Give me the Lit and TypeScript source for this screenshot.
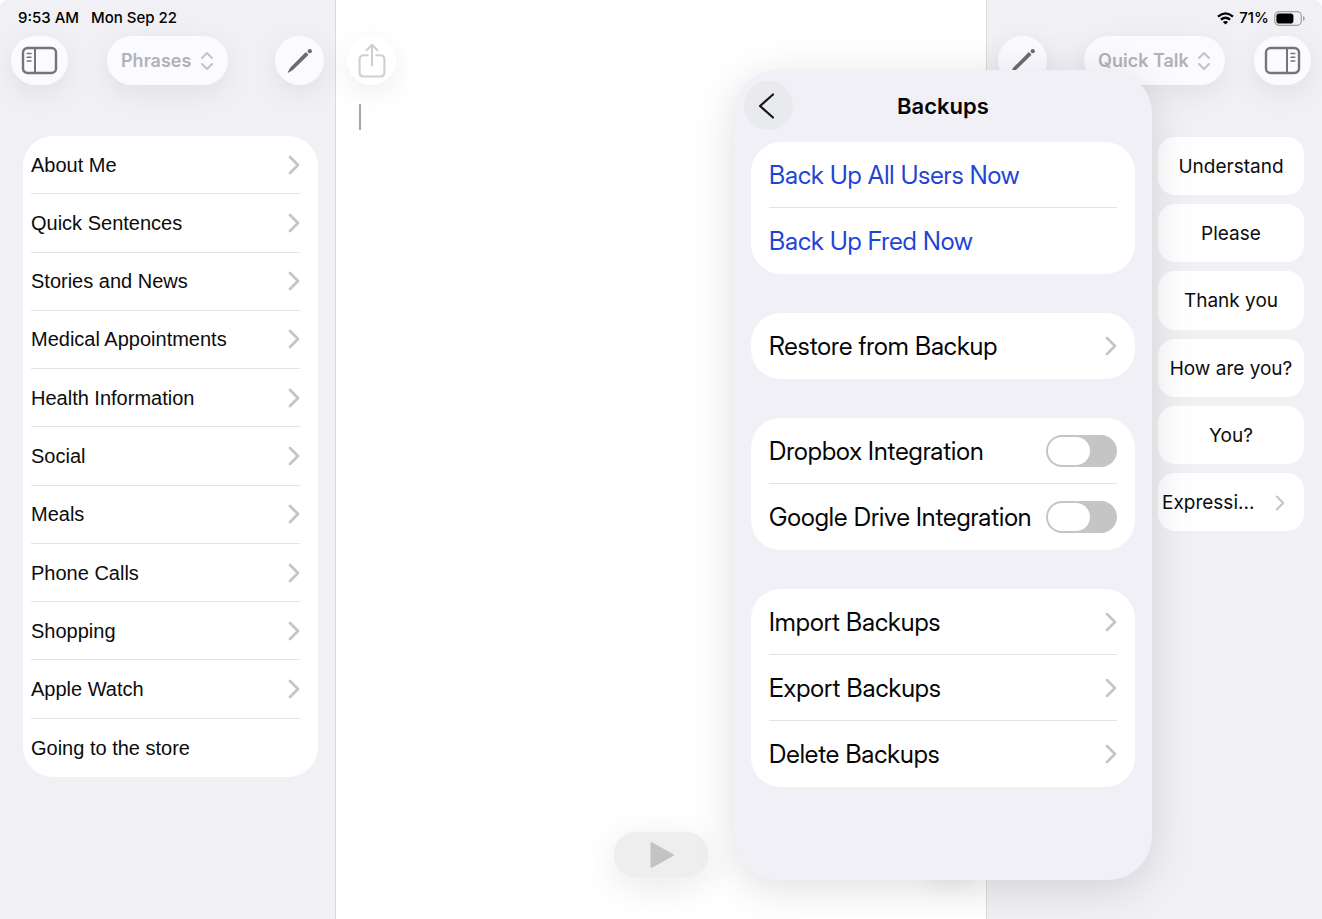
import { LitElement, html, svg, css, nothing } from "lit";
import { customElement, property } from "lit/decorators.js";

interface Phrase {
  label: string;
  folder: boolean;
}

interface BackupRow {
  label: string;
  kind: "action" | "link" | "toggle";
}

const PHRASES: Phrase[] = [
  { label: "About Me", folder: true },
  { label: "Quick Sentences", folder: true },
  { label: "Stories and News", folder: true },
  { label: "Medical Appointments", folder: true },
  { label: "Health Information", folder: true },
  { label: "Social", folder: true },
  { label: "Meals", folder: true },
  { label: "Phone Calls", folder: true },
  { label: "Shopping", folder: true },
  { label: "Apple Watch", folder: true },
  { label: "Going to the store", folder: false },
];

const QUICK_TALK: Phrase[] = [
  { label: "Understand", folder: false },
  { label: "Please", folder: false },
  { label: "Thank you", folder: false },
  { label: "How are you?", folder: false },
  { label: "You?", folder: false },
  { label: "Expressi...", folder: true },
];

const BACKUP_GROUPS: BackupRow[][] = [
  [
    { label: "Back Up All Users Now", kind: "action" },
    { label: "Back Up Fred Now", kind: "action" },
  ],
  [{ label: "Restore from Backup", kind: "link" }],
  [
    { label: "Dropbox Integration", kind: "toggle" },
    { label: "Google Drive Integration", kind: "toggle" },
  ],
  [
    { label: "Import Backups", kind: "link" },
    { label: "Export Backups", kind: "link" },
    { label: "Delete Backups", kind: "link" },
  ],
];

const chevron = (weight: number) => html`
  <svg class="chevron" width="12" height="20" viewBox="0 0 12 20" fill="none" stroke="#c4c4c6"
    stroke-width=${weight} stroke-linecap="round" stroke-linejoin="round" aria-hidden="true">
    <path d="M2 2 L10 10 L2 18" />
  </svg>
`;

const sidebarIcon = (flip: boolean) => html`
  <svg width="37" height="29" viewBox="0 0 37 29" fill="none" stroke="#757575" aria-hidden="true">
    <g transform=${flip ? "translate(37 0) scale(-1 1)" : ""}>
      ${svg`
        <rect x="2" y="2" width="33" height="25" rx="4.5" stroke-width="2.4" />
        <path d="M14 2 V27" stroke-width="2" />
        <path d="M6.2 7.5 H10 M6.2 11.3 H10 M6.2 15.1 H10" stroke-width="1.5" stroke-linecap="round" />
      `}
    </g>
  </svg>
`;

const pencilIcon = html`
  <svg width="28" height="28" viewBox="0 0 28 28" fill="#6c6c6c" aria-hidden="true">
    <path d="M19.8 5 L22.6 7.8 L6.9 23.1 L2.8 25.6 Q1.6 26 1.9 24.9 L4.2 20.7 Z" />
    <circle cx="23.8" cy="4.2" r="2.1" />
  </svg>
`;

const shareIcon = html`
  <svg width="28" height="36" viewBox="0 0 28 36" fill="none" stroke="#cfcfcf" stroke-width="2.1"
    stroke-linecap="round" stroke-linejoin="round" aria-hidden="true">
    <path d="M9.6 12.3 H5.8 Q1.6 12.3 1.6 16.5 V29.3 Q1.6 33.5 5.8 33.5 H22.2 Q26.4 33.5 26.4 29.3 V16.5 Q26.4 12.3 22.2 12.3 H18.4" />
    <path d="M14 22.5 V2 M8.5 7.3 L14 1.8 L19.5 7.3" />
  </svg>
`;

@customElement("picker-pill")
export class PickerPill extends LitElement {
  @property() value = "";

  static styles = css`
    :host {
      display: block;
    }
    .pill {
      display: flex;
      align-items: center;
      gap: 8px;
      height: 49px;
      padding: 1px 14px 0;
      box-sizing: border-box;
      border-radius: 25px;
      background: #fbfaff;
      box-shadow: 0 8px 28px rgba(0, 0, 0, 0.07);
    }
    select {
      appearance: none;
      border: 0;
      margin: 0;
      padding: 0;
      background: none;
      color: #b2b2b6;
      font: 600 18px / 24px Inter, sans-serif;
    }
  `;

  render() {
    return html`
      <div class="pill">
        <select aria-label="Phrase set">
          <option>${this.value}</option>
        </select>
        <svg width="14" height="20" viewBox="0 0 14 20" fill="none" stroke="#c3c3c6" stroke-width="2"
          stroke-linecap="round" stroke-linejoin="round" aria-hidden="true">
          <path d="M2 7 L7 2 L12 7 M2 13 L7 18 L12 13" />
        </svg>
      </div>
    `;
  }
}

@customElement("backups-popover")
export class BackupsPopover extends LitElement {
  static styles = css`
    :host {
      display: flex;
      flex-direction: column;
      box-sizing: border-box;
      padding: 11px 17px 17px;
      border-radius: 44px;
      background: #f0f0f6;
      box-shadow: 0 8px 44px rgba(0, 0, 0, 0.13);
      font-family: Inter, sans-serif;
      color: #060606;
    }
    .head {
      display: grid;
      grid-template-columns: 1fr auto 1fr;
      align-items: center;
      margin: 0 -7px 12px;
    }
    .back {
      display: grid;
      place-items: center;
      width: 49px;
      height: 49px;
      padding: 0 5px 0 0;
      border: 0;
      border-radius: 50%;
      background: #e9eaee;
    }
    h2 {
      margin: 0;
      font-size: 22px;
      line-height: 28px;
      font-weight: 600;
    }
    .groups {
      display: grid;
      gap: 39px;
    }
    .card {
      border-radius: 30px;
      background: #fff;
      padding: 0 18px;
    }
    .row {
      display: flex;
      align-items: center;
      justify-content: space-between;
      width: 100%;
      height: 66px;
      box-sizing: border-box;
      padding: 0;
      border: 0;
      background: none;
      color: inherit;
      font: 400 25px / 30px "Inter Display", Roboto, sans-serif;
      text-align: left;
      white-space: nowrap;
    }
    .row:not(:last-child) {
      border-bottom: 1px solid #e4e4e6;
    }
    .action {
      color: #1f45d6;
    }
    .switch {
      appearance: none;
      flex: none;
      display: flex;
      align-items: center;
      width: 71px;
      height: 32px;
      margin: 0;
      padding: 0 2px;
      box-sizing: border-box;
      border-radius: 16px;
      background: #c5c5c5;
    }
    .switch::before {
      content: "";
      width: 42px;
      height: 28px;
      border-radius: 14px;
      background: #fff;
    }
    .switch:checked {
      justify-content: flex-end;
      background: #34c759;
    }
  `;

  private renderRow(row: BackupRow) {
    if (row.kind === "toggle") {
      return html`
        <label class="row">
          <span>${row.label}</span>
          <input class="switch" type="checkbox" role="switch" />
        </label>
      `;
    }
    return html`
      <button class="row ${row.kind}">
        <span>${row.label}</span>
        ${row.kind === "link" ? chevron(2.5) : nothing}
      </button>
    `;
  }

  render() {
    return html`
      <div class="head">
        <button class="back" aria-label="Back">
          <svg width="17" height="28" viewBox="0 0 17 28" fill="none" stroke="#161616" stroke-width="2.2"
            stroke-linecap="round" stroke-linejoin="round" aria-hidden="true">
            <path d="M15 2.5 L2 14 L15 25.5" />
          </svg>
        </button>
        <h2>Backups</h2>
      </div>
      <div class="groups">
        ${BACKUP_GROUPS.map(
          (group) => html`<section class="card">${group.map((row) => this.renderRow(row))}</section>`
        )}
      </div>
    `;
  }
}

@customElement("app-root")
export class AppRoot extends LitElement {
  static styles = css`
    :host {
      display: grid;
      grid-template-columns: 336px minmax(0, 1fr) 336px;
      position: relative;
      min-height: 100vh;
      overflow: hidden;
      background: #fff;
      font-family: Inter, sans-serif;
      color: #0c0c0c;
    }
    .panel {
      display: flex;
      flex-direction: column;
      background: #f0f0f5;
    }
    .left {
      border-right: 1px solid #dadade;
      border-top-left-radius: 8px;
    }
    .right {
      border-left: 1px solid #dadade;
      border-top-right-radius: 8px;
    }
    .status {
      display: flex;
      align-items: center;
      gap: 12px;
      height: 36px;
      padding: 0 17px 0 18px;
      font-size: 15px;
      line-height: 20px;
      font-weight: 500;
      color: #000;
    }
    .status-right {
      justify-content: flex-end;
      gap: 5px;
    }
    .bar {
      display: grid;
      grid-template-columns: 1fr auto 1fr;
      align-items: center;
      height: 49px;
      padding: 0 11px;
    }
    .end {
      justify-self: end;
    }
    .round {
      display: grid;
      place-items: center;
      width: 49px;
      height: 49px;
      padding: 0;
      border: 0;
      border-radius: 25px;
      background: #fbfaff;
      box-shadow: 0 8px 28px rgba(0, 0, 0, 0.07);
    }
    .wide {
      width: 57px;
    }
    .list {
      display: grid;
      grid-auto-rows: 1fr;
      min-height: 641px;
      margin: 51px 17px 0 23px;
      padding: 0 18px 0 8px;
      box-sizing: border-box;
      border-radius: 30px;
      background: #fff;
    }
    .item {
      display: flex;
      align-items: center;
      justify-content: space-between;
      padding: 0;
      border: 0;
      background: none;
      color: inherit;
      font: 400 20px / 24px "Liberation Sans", sans-serif;
      text-align: left;
    }
    .item:not(:last-child) {
      border-bottom: 1px solid #e4e4e6;
    }
    .composer {
      display: flex;
      flex-direction: column;
      padding: 36px 11px 40px;
    }
    .plain {
      background: #fff;
    }
    .page {
      display: flex;
      flex: 1;
      padding: 19px 0 0 12px;
    }
    .caret {
      width: 2px;
      height: 26px;
      background: #a6a6a6;
    }
    textarea {
      flex: 1;
      min-width: 0;
      padding: 0;
      border: 0;
      outline: 0;
      resize: none;
      background: none;
      font: 400 20px / 26px Inter, sans-serif;
    }
    .foot {
      display: grid;
      grid-template-columns: 1fr auto 1fr;
      align-items: end;
    }
    .play {
      grid-column: 2;
      display: grid;
      place-items: center;
      width: 96px;
      height: 48px;
      padding: 0 0 0 2px;
      border: 1px solid #f6f6f6;
      border-radius: 24px;
      background: #eee;
      box-shadow: 0 8px 36px rgba(0, 0, 0, 0.09);
    }
    .quick {
      display: grid;
      grid-template-columns: 1fr 1fr;
      grid-auto-rows: 1fr;
      gap: 9px;
      min-height: 394px;
      margin: 52px 18px 0 16px;
    }
    .tile {
      grid-column: 2;
      display: flex;
      align-items: center;
      justify-content: center;
      padding: 2px 0 0;
      border: 0;
      border-radius: 17px;
      background: #fff;
      color: inherit;
      font: 400 19px / 24px Inter, sans-serif;
      white-space: nowrap;
    }
    .folder {
      justify-content: space-between;
      padding: 2px 18px 0 4px;
    }
    .folder .chevron {
      height: 16px;
    }
    .popover {
      position: absolute;
      top: 70px;
      right: 170px;
      bottom: 39px;
      width: 418px;
    }
  `;

  render() {
    return html`
      <nav class="panel left">
        <div class="status"><span>9:53 AM</span><span>Mon Sep 22</span></div>
        <div class="bar">
          <button class="round wide" aria-label="Toggle phrases panel">${sidebarIcon(false)}</button>
          <picker-pill value="Phrases"></picker-pill>
          <button class="round end" aria-label="Edit phrases">${pencilIcon}</button>
        </div>
        <div class="list">
          ${PHRASES.map(
            (p) => html`
              <button class="item"><span>${p.label}</span>${p.folder ? chevron(2.8) : nothing}</button>
            `
          )}
        </div>
      </nav>

      <main class="composer">
        <div><button class="round plain" aria-label="Share">${shareIcon}</button></div>
        <div class="page">
          <span class="caret"></span>
          <textarea aria-label="Message"></textarea>
        </div>
        <div class="foot">
          <button class="play" aria-label="Speak">
            <svg width="26" height="28" viewBox="0 0 26 28" fill="#c3c3c3" stroke="#c3c3c3" stroke-width="2"
              stroke-linejoin="round" aria-hidden="true">
              <path d="M2.5 2 V26 L24 14 Z" />
            </svg>
          </button>
          <button class="round plain end" aria-label="More"></button>
        </div>
      </main>

      <aside class="panel right">
        <div class="status status-right">
          <svg width="17" height="13" viewBox="0 0 17 13" fill="none" stroke="#000" stroke-width="2.3" aria-hidden="true">
            <path d="M1 4.6 Q8.5 -1.8 16 4.6" />
            <path d="M3.9 7.7 Q8.5 3.9 13.1 7.7" />
            <path d="M8.5 12.6 L5.9 10 Q8.5 7.8 11.1 10 Z" fill="#000" stroke="none" />
          </svg>
          <span>71%</span>
          <svg width="31" height="15" viewBox="0 0 31 15" aria-hidden="true">
            <rect x="0.7" y="0.7" width="26.6" height="13.6" rx="4.3" fill="none" stroke="#a3a3a6" stroke-width="1.2" />
            <rect x="2.4" y="2.4" width="17" height="10.2" rx="2.8" fill="#000" />
            <path d="M29 5 Q30.8 5.8 30.8 7.5 Q30.8 9.2 29 10 Z" fill="#a3a3a6" />
          </svg>
        </div>
        <div class="bar">
          <button class="round" aria-label="Edit quick talk">${pencilIcon}</button>
          <picker-pill value="Quick Talk"></picker-pill>
          <button class="round wide end" aria-label="Toggle quick talk panel">${sidebarIcon(true)}</button>
        </div>
        <div class="quick">
          ${QUICK_TALK.map(
            (p) => html`
              <button class="tile ${p.folder ? "folder" : ""}">
                <span>${p.label}</span>${p.folder ? chevron(2.6) : nothing}
              </button>
            `
          )}
        </div>
      </aside>

      <backups-popover class="popover" role="dialog" aria-label="Backups"></backups-popover>
    `;
  }
}
